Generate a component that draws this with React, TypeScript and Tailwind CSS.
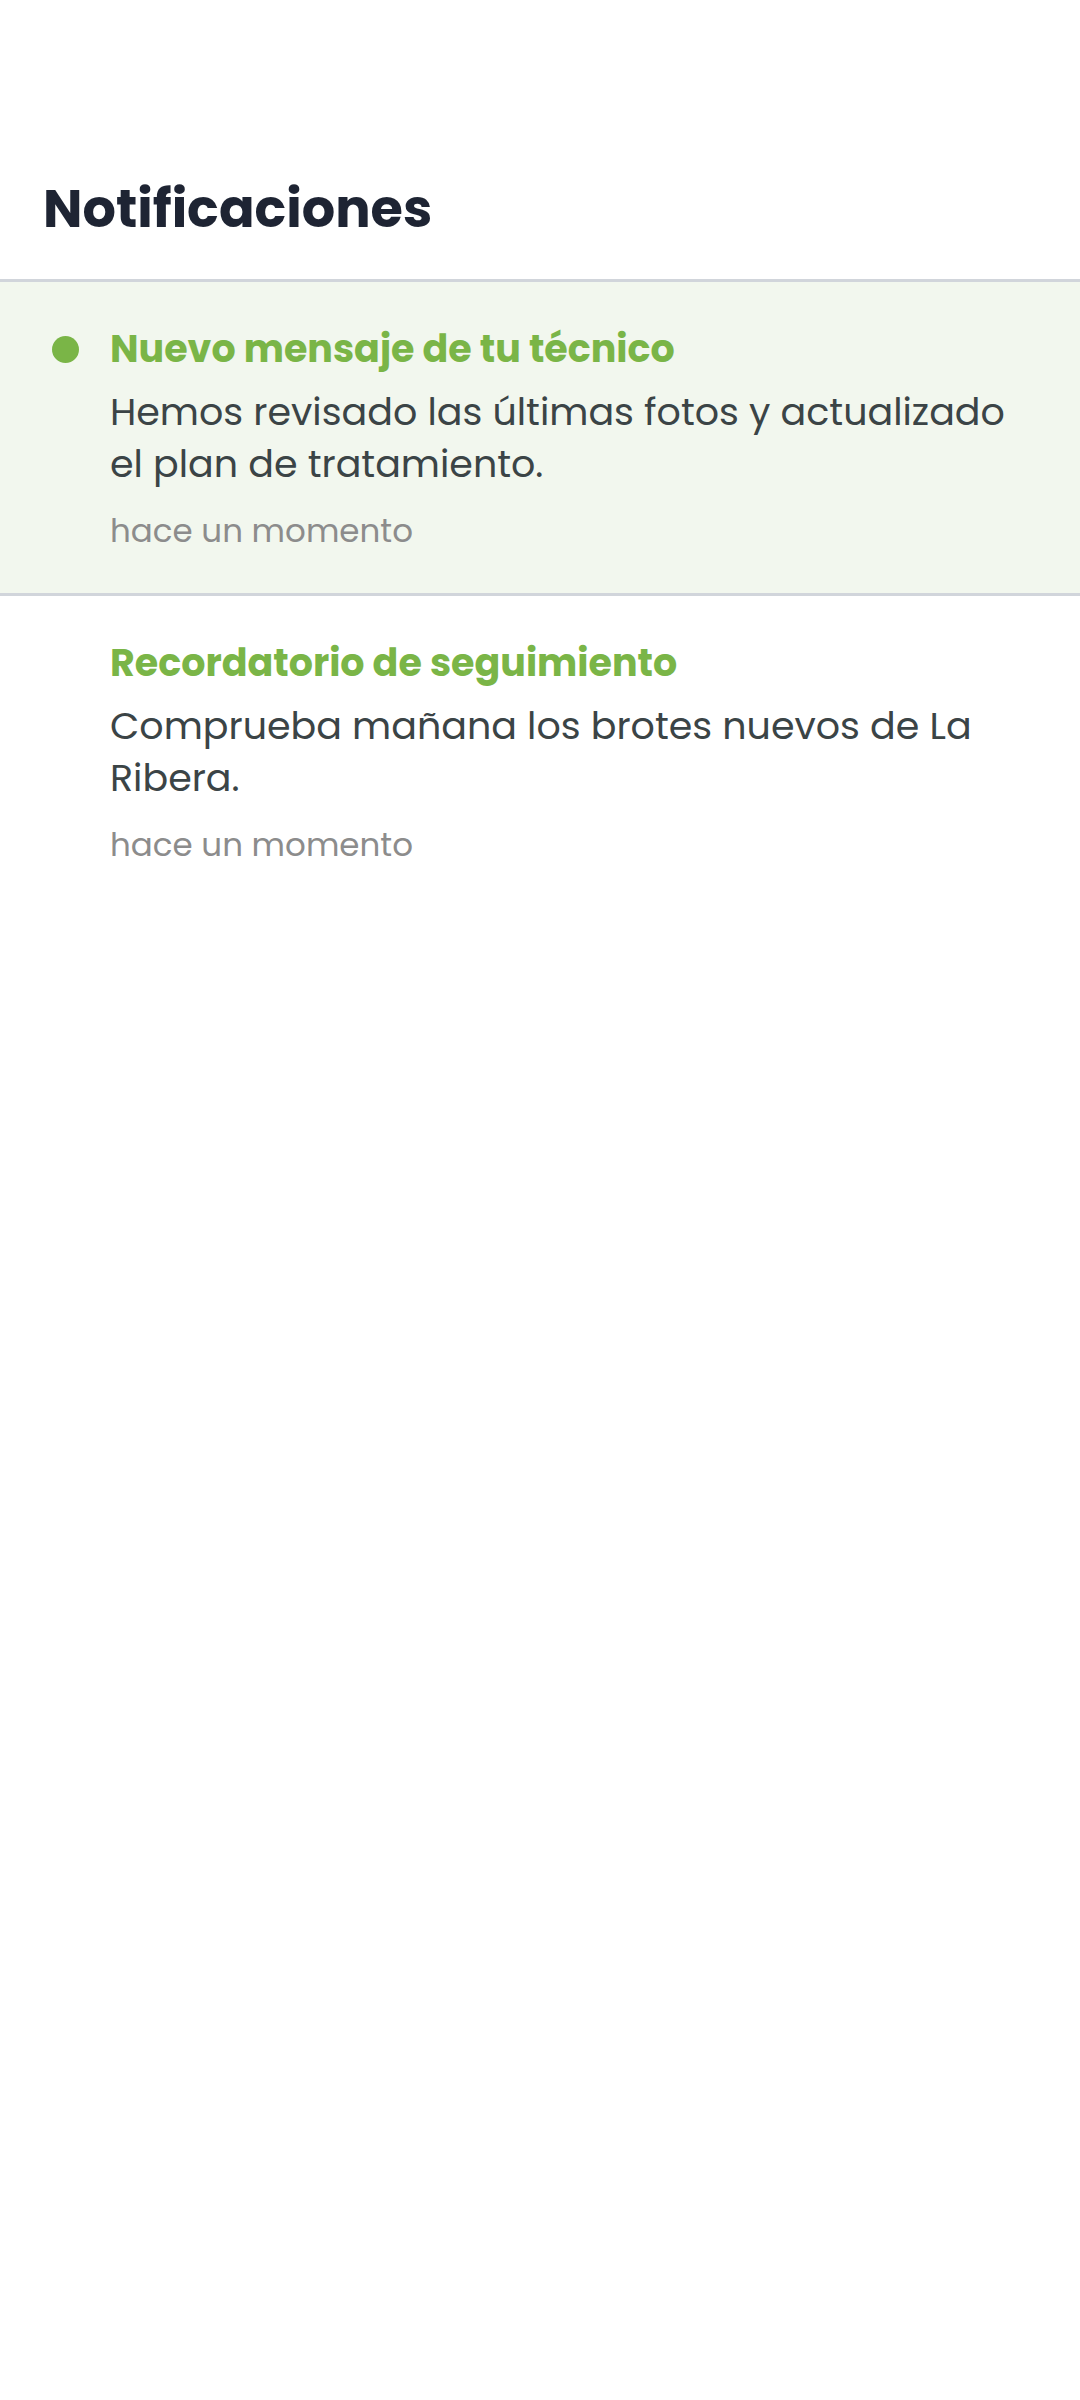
import React from "react";

type Notice = {
  title: string;
  body: string;
  time: string;
  unread: boolean;
};

const notices: Notice[] = [
  {
    title: "Nuevo mensaje de tu técnico",
    body: "Hemos revisado las últimas fotos y actualizado el plan de tratamiento.",
    time: "hace un momento",
    unread: true,
  },
  {
    title: "Recordatorio de seguimiento",
    body: "Comprueba mañana los brotes nuevos de La Ribera.",
    time: "hace un momento",
    unread: false,
  },
];

function NoticeRow({ n }: { n: Notice }) {
  return (
    <div
      className={
        n.unread
          ? "flex bg-[#f2f7ee] border-b-[3px] border-[#d1d5db] pl-[52px] pr-[42px] pt-[43px] pb-[42px]"
          : "flex bg-white pl-[52px] pr-[42px] pt-[43px] pb-[42px]"
      }
    >
      {/* unread dot */}
      <div className="w-[27px] shrink-0 mr-[31px]">
        {n.unread && <div className="mt-[11px] w-[27px] h-[27px] rounded-full bg-[#7ab547]" />}
      </div>
      <div className="flex-1 min-w-0">
        <div className="text-[38px] leading-[48px] font-bold text-[#7ab547]">{n.title}</div>
        <p className="mt-[13px] text-[38px] leading-[52px] text-[#3b4446]">{n.body}</p>
        <div className="mt-[21px] text-[32.5px] leading-[40px] text-[#8c8c8c]">{n.time}</div>
      </div>
    </div>
  );
}

export default function App() {
  return (
    <div
      className="w-[1080px] h-[2400px] bg-white"
      style={{ fontFamily: "Poppins, Inter, 'Noto Sans', sans-serif" }}
    >
      <div className="pl-[43px] pt-[177px] pb-[38px] border-b-[3px] border-[#d1d5db]">
        <h1 className="text-[52.5px] leading-[64px] font-bold text-[#1e2433]">Notificaciones</h1>
      </div>
      <div>
        {notices.map((n) => (
          <NoticeRow key={n.title} n={n} />
        ))}
      </div>
    </div>
  );
}
